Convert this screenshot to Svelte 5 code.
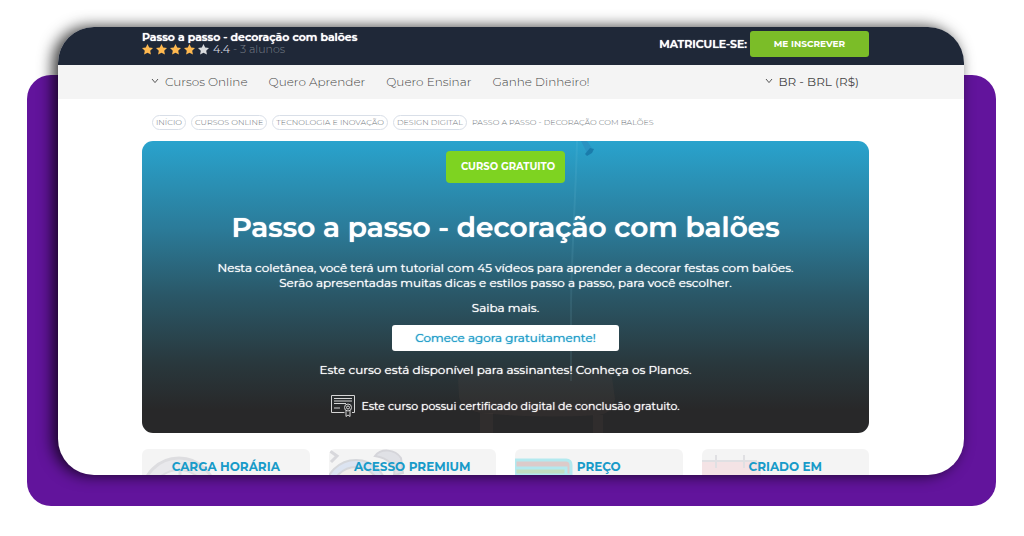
<script>
	const navLinks = ['Quero Aprender', 'Quero Ensinar', 'Ganhe Dinheiro!'];
	const crumbs = ['INÍCIO', 'CURSOS ONLINE', 'TECNOLOGIA E INOVAÇÃO', 'DESIGN DIGITAL'];
	const facts = [
		{ icon: 'clock', title: 'CARGA HORÁRIA' },
		{ icon: 'medal', title: 'ACESSO PREMIUM' },
		{ icon: 'money', title: 'PREÇO' },
		{ icon: 'calendar', title: 'CRIADO EM' }
	];
	const rating = 4.4;
</script>

{#snippet chevron()}
	<svg class="chevron" viewBox="0 0 8 6" aria-hidden="true">
		<path d="M1 1l3 3.6L7 1" />
	</svg>
{/snippet}

<div class="stage">
	<div class="backdrop"></div>

	<main class="panel">
		<header class="topbar wrap">
			<div class="course">
				<strong>Passo a passo - decoração com balões</strong>
				<div class="rating">
					{#each [1, 2, 3, 4, 5] as n}
						<svg class="star" class:off={n > Math.round(rating)} viewBox="0 0 24 24" aria-hidden="true">
							<path d="M12 0l3.700 7.800 8.300 1-6.100 5.800 1.600 8.400L12 19l-7.500 4 1.600-8.400L0 8.800l8.300-1z" />
						</svg>
					{/each}
					<span class="score">{rating}</span>
					<span class="students">- 3 alunos</span>
				</div>
			</div>
			<div class="enroll">
				<strong>MATRICULE-SE:</strong>
				<button class="enroll-btn">ME INSCREVER</button>
			</div>
		</header>

		<nav class="menu wrap">
			<button class="drop light">{@render chevron()}Cursos Online</button>
			{#each navLinks as link}
				<a class="light" href="#top">{link}</a>
			{/each}
			<button class="drop currency">{@render chevron()}BR - BRL (R$)</button>
		</nav>

		<div class="content wrap">
			<ol class="crumbs">
				{#each crumbs as crumb}
					<li><a href="#top">{crumb}</a></li>
				{/each}
				<li>PASSO A PASSO - DECORAÇÃO COM BALÕES</li>
			</ol>

			<section class="hero">
				<svg class="photo" viewBox="0 0 727 292" preserveAspectRatio="xMidYMid slice" aria-hidden="true">
					<path class="string" d="M435 0c-1 50-6 120-6 170v70" />
					<path class="knot soft" d="M439 0h6l5 7-5 5z" />
					<path class="knot" d="M443 13l5-6 4 1-2 4-5 3z" />
					<path class="seat" d="M316 238q2-9 12-9 66 7 132-3 8 0 10 10l3 22q-2 14-16 16-58 4-118-2-20-4-22-16z" />
					<path class="seat" d="M338 272h13v20h-13zM451 274h10v18h-10z" />
				</svg>
				<span class="badge">CURSO GRATUITO</span>
				<h1>Passo a passo - decoração com balões</h1>
				<p class="intro">
					Nesta coletânea, você terá um tutorial com 45 vídeos para aprender a decorar festas com balões.<br />
					Serão apresentadas muitas dicas e estilos passo a passo, para você escolher.
				</p>
				<a class="more" href="#top">Saiba mais.</a>
				<a class="start" href="#top">Comece agora gratuitamente!</a>
				<p>Este curso está disponível para assinantes! Conheça os Planos.</p>
				<div class="certificate">
					<svg viewBox="0 0 24 22" aria-hidden="true">
						<path d="M13.500 17.500H.5V.5h23v17h-2.500M3 3.500h18M3 6h18M3 8.500h12M3 13h6" />
						<circle cx="17" cy="12.500" r="3.500" />
						<circle cx="17" cy="12.500" r="1.500" />
						<path d="M15 15.500v6l2-1.500 2 1.500v-6" />
					</svg>
					<span>Este curso possui certificado digital de conclusão gratuito.</span>
				</div>
			</section>

			<div class="facts">
				{#each facts as fact}
					<article class="fact">
						<svg class="fact-art" viewBox="0 0 100 26" aria-hidden="true">
							{#if fact.icon === 'clock'}
								<circle cx="37" cy="46" r="37" fill="#e9e9ec" stroke="#dddde0" stroke-width="3" />
								<circle cx="37" cy="50" r="29" fill="#f1f0f3" stroke="#dddde0" stroke-width="2" />
								<path d="M38 21v5" stroke="#dddde0" stroke-width="3" />
							{:else if fact.icon === 'medal'}
								<path d="M1 2l7 5-6 6" fill="none" stroke="#d8d8dc" stroke-width="3" />
								<circle cx="27" cy="42" r="31" fill="#dce4f1" stroke="#d5d7db" stroke-width="2" />
								<circle cx="27" cy="42" r="24" fill="#f2eeea" stroke="#d5d7db" stroke-width="2" />
								<path d="M46 7C52-1 66 0 72 9l2 15-9 2c2-9-6-17-19-19z" fill="#e0e1e6" stroke="#d5d5da" stroke-width="2" />
							{:else if fact.icon === 'money'}
								<path d="M0 11h51q5 0 5 5v10H0z" fill="#dccbca" stroke="#b3e9ef" stroke-width="3" />
								<path d="M0 19h51v7H0z" fill="#c3dfbf" stroke="#b3e9ef" stroke-width="3" />
							{:else}
								<path d="M0 12h55q4 0 4 5v9H0z" fill="#f4e3e5" />
								<path d="M0 12h55M14 6v13M42 6v13" stroke="#e0e0e3" stroke-width="2" />
							{/if}
						</svg>
						<h2>{fact.title}</h2>
					</article>
				{/each}
			</div>
		</div>
	</main>
</div>

<style>
	:global(body) {
		background: #fff;
	}

	.stage {
		display: grid;
		padding: 27px 28px 30px 27px;
		font-family: Montserrat, Inter, sans-serif;
		font-size: 12px;
		color: #fff;
	}

	.backdrop,
	.panel {
		grid-area: 1 / 1;
	}

	.backdrop {
		margin-top: 48px;
		border-radius: 24px;
		background: #62149c;
	}

	.panel {
		margin: 0 32px 31px 31px;
		border-radius: 36px;
		overflow: hidden;
		background: #fff;
		box-shadow: -5px 0 15px rgba(0, 0, 0, 0.8);
	}

	.wrap {
		padding-left: 84px;
		padding-right: 95px;
	}

	a {
		color: inherit;
		text-decoration: none;
	}

	button {
		padding: 0;
		border: 0;
		background: none;
		font: inherit;
		color: inherit;
		cursor: pointer;
	}

	h1,
	h2,
	p,
	ol {
		margin: 0;
		padding: 0;
	}

	strong {
		font-weight: 600;
		text-shadow: 0 0 1px currentColor;
	}

	.topbar {
		display: flex;
		justify-content: space-between;
		align-items: center;
		height: 38px;
		background: #1f2838;
	}

	.course {
		font-size: 11px;
		line-height: 12px;
		padding-bottom: 6px;
	}

	.rating {
		display: flex;
		align-items: center;
		gap: 3px;
		font-weight: 300;
	}

	.star {
		width: 11px;
		height: 11px;
		fill: #ffb950;
	}

	.star.off {
		fill: #d8dadd;
	}

	.score {
		margin-left: 1px;
		font-weight: 400;
		color: #d9dce1;
	}

	.students {
		color: #7b818b;
	}

	.enroll {
		display: flex;
		align-items: center;
		gap: 3px;
		font-size: 11px;
		padding-bottom: 5px;
	}

	.enroll-btn {
		width: 119px;
		height: 26px;
		border-radius: 3px;
		background: #7bbd28;
		font-size: 9px;
		font-weight: 700;
	}

	.menu {
		display: flex;
		align-items: center;
		gap: 21px;
		height: 32px;
		padding-bottom: 2px;
		background: #f4f4f4;
		font-size: 12px;
		color: #444;
	}

	.light {
		font-weight: 300;
	}

	.drop {
		display: flex;
		align-items: center;
		gap: 6px;
		padding-left: 9px;
	}

	.currency {
		margin-left: auto;
		padding-right: 10px;
	}

	.chevron {
		width: 8px;
		height: 6px;
		fill: none;
		stroke: #555;
	}

	.content {
		padding-top: 16px;
	}

	.crumbs {
		display: flex;
		align-items: center;
		gap: 5px;
		margin-left: 10px;
		list-style: none;
		font-size: 8px;
		font-weight: 300;
		line-height: 13px;
		color: #6c7278;
		white-space: nowrap;
	}

	.crumbs a {
		display: block;
		padding: 0 3px;
		border: 1px solid #d9dfe8;
		border-radius: 8px;
	}

	.hero {
		position: relative;
		display: flex;
		flex-direction: column;
		align-items: center;
		margin-top: 11px;
		padding: 10px 16px 16px;
		border-radius: 11px;
		overflow: hidden;
		background: linear-gradient(#29a3cd, #2b7b99 30%, #2a5767 53%, #29383d 76%, #282829 92%);
		font-size: 12px;
		line-height: 15px;
		text-align: center;
		text-shadow: 0 0 1px currentColor;
	}

	.photo {
		position: absolute;
		inset: 0;
		width: 100%;
		height: 100%;
	}

	.hero > :not(.photo) {
		position: relative;
	}

	.string {
		fill: none;
		stroke: rgba(150, 220, 235, 0.1);
		stroke-width: 2;
	}

	.knot {
		fill: #1a7cab;
	}

	.knot.soft {
		fill: #2a93c2;
	}

	.seat {
		fill: rgba(110, 85, 75, 0.13);
	}

	.badge {
		padding: 0 10px 0 15px;
		border-radius: 4px;
		background: #7ed321;
		font-size: 10px;
		font-weight: 700;
		line-height: 32px;
		text-shadow: none;
	}

	h1 {
		margin-top: 25px;
		font-size: 28px;
		font-weight: 600;
		line-height: 38px;
	}

	.intro {
		margin-top: 14px;
	}

	.more {
		margin: 10px 0;
	}

	.start {
		width: 227px;
		margin-bottom: 11px;
		border-radius: 3px;
		background: #fff;
		line-height: 26px;
		color: #1c9cc9;
	}

	.certificate {
		display: flex;
		align-items: center;
		gap: 6px;
		margin-top: 18px;
		font-size: 11px;
	}

	.certificate svg {
		width: 24px;
		height: 22px;
		fill: none;
		stroke: #d5d5d5;
	}

	.facts {
		display: grid;
		grid-template-columns: repeat(4, 1fr);
		gap: 19px;
		margin-top: 16px;
	}

	.fact {
		position: relative;
		height: 26px;
		border-radius: 6px 6px 0 0;
		overflow: hidden;
		background: #f4f4f4;
	}

	.fact-art {
		position: absolute;
		top: 0;
		left: 0;
		width: 100px;
		height: 26px;
	}

	h2 {
		position: relative;
		padding-top: 9px;
		font-size: 12px;
		font-weight: 700;
		line-height: 17px;
		text-align: center;
		color: #189bc9;
	}
</style>
